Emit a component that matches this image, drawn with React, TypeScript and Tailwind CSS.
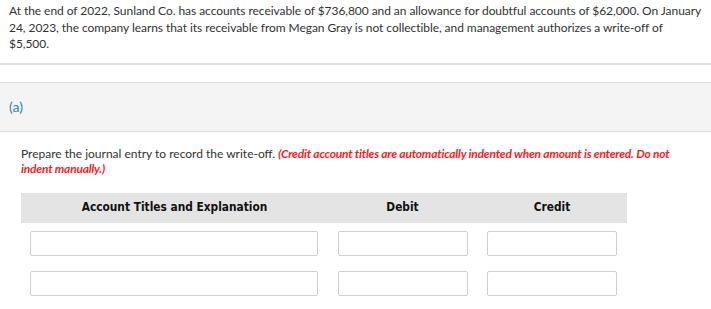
export default function App() {
  const lato = { fontFamily: "Lato, 'Noto Sans', sans-serif" };
  const head = "font-['DejaVu_Sans_Condensed','DejaVu_Sans',sans-serif]";
  return (
    <div className="w-[711px] h-[309px] bg-white overflow-hidden text-[#333]" style={lato}>
      <div className="px-[9px] pt-[3px] pb-[10px] text-[12px] leading-[16.5px] tracking-[-0.06px] border-b-2 border-[#e0e0e0]">
        At the end of 2022, Sunland Co. has accounts receivable of $736,800 and an allowance for doubtful accounts of $62,000. On January 24, 2023, the company learns that its receivable from Megan Gray is not collectible, and management authorizes a write-off of $5,500.
      </div>
      <div className="h-[17px]" />
      <div className="h-[50px] bg-[#f4f4f4] border-y border-[#dcdcdc] flex items-center px-[9px]">
        <span className="text-[14px] text-[#2a86c4]">(a)</span>
      </div>
      <div className="px-[21px] pt-[14px] text-[12px] leading-[15px]">
        Prepare the journal entry to record the write-off.{" "}
        <span className="text-[#ff1a1a] font-bold italic tracking-[-0.2px]">
          (Credit account titles are automatically indented when amount is entered. Do not indent manually.)
        </span>
      </div>
      <div className="ml-[21px] mt-[17px] w-[606px]">
        <div className={`h-[30px] bg-[#e4e4e4] grid grid-cols-[307px_149px_150px] items-center text-[11.8px] font-bold text-[#111] ${head}`}>
          <div className="text-center">Account Titles and Explanation</div>
          <div className="text-center">Debit</div>
          <div className="text-center">Credit</div>
        </div>
        {[0, 1].map((i) => (
          <div key={i} className="grid grid-cols-[307px_149px_150px] mt-[8px] pb-[7px]">
            <div className="pl-[9px]">
              <input className="block w-[288px] h-[25px] border border-[#cfcfcf] rounded-[2px] bg-white" />
            </div>
            <div className="pl-[10px]">
              <input className="block w-[130px] h-[25px] border border-[#cfcfcf] rounded-[2px] bg-white" />
            </div>
            <div className="pl-[10px]">
              <input className="block w-[130px] h-[25px] border border-[#cfcfcf] rounded-[2px] bg-white" />
            </div>
          </div>
        ))}
      </div>
    </div>
  );
}
